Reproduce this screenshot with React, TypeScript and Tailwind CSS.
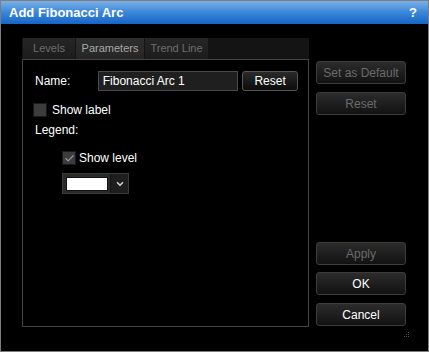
import { ChevronDown, Check } from 'lucide-react'

function DlgButton({ label, disabled, className = '' }: { label: string; disabled?: boolean; className?: string }) {
  return (
    <button
      className={`flex h-[23px] w-[90px] items-center justify-center rounded-[3px] border border-[#3c3c3c] bg-gradient-to-b from-[#2c2c2c] to-[#121212] text-[12px] ${
        disabled ? 'text-[#6a6a6a]' : 'text-white'
      } ${className}`}
      type="button"
    >
      {label}
    </button>
  )
}

const tabs = [
  { name: 'Levels', w: 'w-[52px]', active: false },
  { name: 'Parameters', w: 'w-[68px]', active: true },
  { name: 'Trend Line', w: 'w-[63px]', active: false },
]

export default function App() {
  return (
    <div className="flex h-[352px] w-[429px] flex-col border border-[#7d7d7d] bg-black font-['Liberation_Sans',Arial,sans-serif] text-[12px]">
      <div className="flex h-[23px] items-center justify-between bg-gradient-to-b from-[#79b0e6] via-[#3a86d8] to-[#1565c8] px-2 text-[13px] font-bold text-white">
        <span>Add Fibonacci Arc</span>
        <span className="pr-[3px]">?</span>
      </div>

      <div className="flex flex-1 pl-[21px] pt-[14px]">
        <div className="flex w-[287px] flex-col">
          <div className="flex h-[21px] gap-[1px] bg-[#141414] pl-[1px] text-[11px]">
            {tabs.map((t) => (
              <div
                className={`flex ${t.w} items-center justify-center bg-gradient-to-b ${
                  t.active ? 'from-[#2e2e2e] to-[#262626] text-[#a8a8a8]' : 'from-[#262626] to-[#1c1c1c] text-[#6e6e6e]'
                }`}
                key={t.name}
              >
                {t.name}
              </div>
            ))}
          </div>
          <div className="flex h-[268px] flex-col border border-[#444] px-[10px] pt-[11px]">
            <div className="flex items-center">
              <span className="w-[65px] pl-[2px] text-white">Name:</span>
              <div className="flex h-[20px] w-[141px] items-center border border-[#4a4a4a] bg-[#1f1f1f] px-[4px] text-white">
                Fibonacci Arc 1
              </div>
              <button
                className="ml-[4px] flex h-[20px] w-[56px] items-center justify-center rounded-[3px] border border-[#555] bg-gradient-to-b from-[#2a2a2a] to-[#0c0c0c] text-white"
                type="button"
              >
                Reset
              </button>
            </div>
            <div className="mt-[10px] flex items-center">
              <span className="h-[14px] w-[14px] border border-[#1a1a1a] bg-[#3c3c3c]" />
              <span className="ml-[5px] text-white">Show label</span>
            </div>
            <div className="mt-[2px] pl-[2px] text-white">Legend:</div>
            <div className="ml-[29px] mt-[10px] flex items-center">
              <span className="flex h-[14px] w-[14px] items-center justify-center border border-[#1a1a1a] bg-[#3c3c3c]">
                <Check className="text-[#9a9a9a]" size={11} strokeWidth={2.5} />
              </span>
              <span className="ml-[3px] text-white">Show level</span>
            </div>
            <div className="ml-[29px] mt-[6px] flex h-[21px] w-[67px] items-center border border-[#3a3a3a] bg-[#2a2a2a] pl-[3px]">
              <span className="h-[14px] w-[43px] border border-[#111] bg-white" />
              <span className="ml-[2px] flex h-[19px] w-[18px] items-center justify-center border-l border-[#111] bg-[#1e1e1e]">
                <ChevronDown className="text-[#cfcfcf]" size={10} strokeWidth={4} />
              </span>
            </div>
          </div>
        </div>

        <div className="ml-[7px] flex flex-col pt-[23px]">
          <DlgButton disabled label="Set as Default" />
          <DlgButton className="mt-[8px]" disabled label="Reset" />
          <DlgButton className="mt-[127px]" disabled label="Apply" />
          <DlgButton className="mt-[7px]" label="OK" />
          <DlgButton className="mt-[8px]" label="Cancel" />
          <div className="ml-auto mr-[-3px] mt-[6px] grid grid-cols-3 gap-[1px]">
            {[0, 0, 1, 0, 1, 1, 1, 1, 1].map((v, i) => (
              <span className={`h-[1px] w-[1px] ${v ? 'bg-[#555]' : ''}`} key={i} />
            ))}
          </div>
        </div>
      </div>
    </div>
  )
}
